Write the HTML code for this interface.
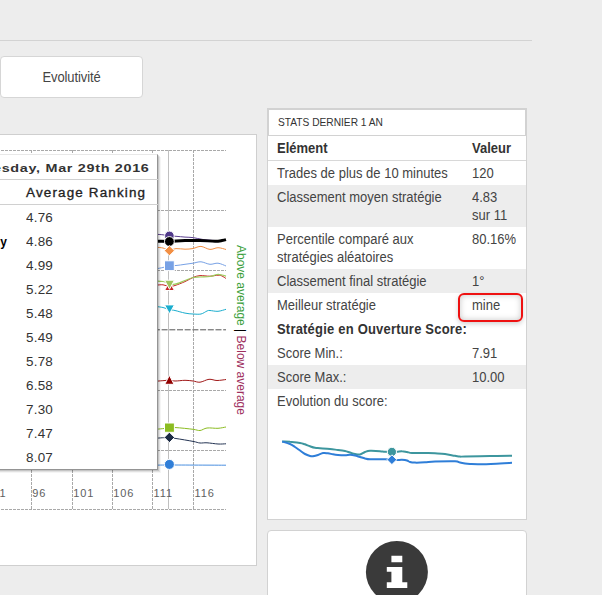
<!DOCTYPE html>
<html><head><meta charset="utf-8">
<style>
*{box-sizing:border-box;margin:0;padding:0}
html,body{width:602px;height:595px;overflow:hidden;background:#ededed;font-family:"Liberation Sans",sans-serif;color:#333;position:relative}
.abs{position:absolute}
#hr{left:0;top:40px;width:532px;height:1px;background:#d3d3d3}
#btn{left:0;top:56px;width:143px;height:42px;background:#fff;border:1px solid #d6d6d6;border-radius:4px;font-size:13px;letter-spacing:-0.1px;text-align:center;line-height:40px;color:#444}
#chart{left:-20px;top:134px;width:277px;height:432px;background:#fff;border:1px solid #cfcfcf}
#svg{left:0;top:0;width:602px;height:595px}
#tip{left:-60px;top:154px;width:218px;height:316px;background:#fff;border:1px solid #e8e8e8;border-right:1px solid #949494;border-bottom:1px solid #949494;box-shadow:1px 1px 0 rgba(0,0,0,0.12),2px 2px 0 rgba(0,0,0,0.08),3px 3px 0 rgba(0,0,0,0.04)}
.tt{font-size:12px;color:#333;white-space:nowrap}
#stats{left:267px;top:108px;width:260px;height:412px;background:#fff;border:1px solid #d2d2d2}
#shead{left:0;top:0;width:258px;height:27px;border:1px solid #d2d2d2;font-size:10.2px;padding-left:9px;line-height:25px;color:#333}
table{position:absolute;left:0;top:27px;width:258px;border-collapse:collapse;font-size:13px;color:#444}
td{padding:3px 0 3px 9px;line-height:18px;vertical-align:top}
td.v{width:59px;padding-left:5px}
tr.g td{background:#ededed}
.t{display:inline-block;transform:translateY(1px) scaleY(1.1);transform-origin:0 13.5px}
tr.h td{font-weight:bold;color:#333;border-bottom:1px solid #d8d8d8;padding-top:3px;padding-bottom:3px;line-height:18px}
#mine{left:457.5px;top:293px;width:65px;height:28.5px;border:2px solid #ee1111;border-radius:6px;box-shadow:inset 0 0 6px rgba(0,0,0,0.22),0 2px 5px rgba(0,0,0,0.18)}
#info{left:267px;top:530px;width:260px;height:80px;background:#fff;border:1px solid #d2d2d2;border-radius:4px}
</style></head><body>
<div id="hr" class="abs"></div>
<div id="btn" class="abs"><span class="t" style="transform-origin:0 25px">Evolutivité</span></div>
<div id="chart" class="abs"></div>

<svg id="svg" class="abs" width="602" height="595" viewBox="0 0 602 595">
 <g stroke="#a9a9a9" stroke-width="1" stroke-dasharray="3,1" fill="none" shape-rendering="crispEdges">
  <path d="M-3 150.5H226M-3 210.5H226M-3 270.5H226M-3 390.5H226M-3 450.5H226M-3 509.5H226"/>
  <path d="M31.5 150V509M72.5 150V509M112.5 150V509M152.5 150V509M193.5 150V509"/>
 </g>
 <path d="M-0.1 329.8H226" stroke="#555" stroke-width="1" stroke-dasharray="6,1.7" fill="none"/>
 <path d="M168.5 150V509" stroke="#c0c0c0" stroke-width="1" shape-rendering="crispEdges"/>
 <g fill="#606060" font-family="Liberation Sans" font-size="11" letter-spacing="0.9">
  <text x="-7.5" y="497">91</text><text x="32.3" y="497">96</text><text x="73.3" y="497">101</text><text x="113.3" y="497">106</text><text x="153.5" y="497">111</text><text x="194.5" y="497">116</text>
 </g>
 <g fill="none" stroke-linejoin="round" stroke-linecap="butt">
  <path d="M156.0 234.3 C157.2 234.4 160.8 234.5 163.0 234.8 C165.2 235.1 167.1 235.7 169.3 235.9 C171.5 236.2 173.4 236.1 176.0 236.3 C178.6 236.5 182.2 236.9 185.0 237.1 C187.8 237.3 190.0 237.2 193.0 237.6 C196.0 238.0 199.3 239.0 203.0 239.5 C206.7 240.0 211.2 240.3 215.0 240.5 C218.8 240.7 224.2 240.5 226.0 240.5" stroke="#5b3f8f" stroke-width="1"/>
  <path d="M156.0 241.2 C158.2 241.2 166.0 241.4 169.3 241.4 C172.6 241.4 173.4 241.2 176.0 241.0 C178.6 240.8 181.0 240.6 185.0 240.5 C189.0 240.4 195.0 240.4 200.0 240.5 C205.0 240.6 211.3 241.2 215.0 241.2 C218.7 241.2 220.2 240.8 222.0 240.5 C223.8 240.2 225.3 239.8 226.0 239.6" stroke="#000" stroke-width="3"/>
  <path d="M156.0 247.3 C157.2 247.4 160.8 247.5 163.0 248.0 C165.2 248.5 167.1 250.4 169.3 250.5 C171.5 250.6 173.4 248.8 176.0 248.6 C178.6 248.4 182.2 249.2 185.0 249.2 C187.8 249.2 190.3 249.0 193.0 248.5 C195.7 248.0 198.2 246.2 201.0 246.4 C203.8 246.6 207.2 249.2 210.0 249.4 C212.8 249.6 215.3 247.7 218.0 247.7 C220.7 247.7 224.7 249.2 226.0 249.5" stroke="#f28f43" stroke-width="1"/>
  <path d="M156.0 268.8 C157.2 268.6 160.8 268.0 163.0 267.5 C165.2 267.0 167.1 266.0 169.3 265.7 C171.5 265.4 173.4 265.7 176.0 265.5 C178.6 265.3 182.2 264.7 185.0 264.3 C187.8 263.9 190.3 263.6 193.0 263.2 C195.7 262.8 198.2 261.6 201.0 261.8 C203.8 262.0 207.2 264.1 210.0 264.3 C212.8 264.5 215.3 262.9 218.0 263.2 C220.7 263.5 224.7 265.5 226.0 266.0" stroke="#77a1e5" stroke-width="1"/>
  <path d="M156.0 285.2 C157.2 285.1 160.8 284.6 163.0 284.8 C165.2 285.0 167.3 286.4 169.3 286.5 C171.3 286.6 172.4 286.3 175.0 285.5 C177.6 284.7 182.0 282.9 185.0 281.6 C188.0 280.3 190.5 278.5 193.0 277.5 C195.5 276.5 197.2 275.8 200.0 275.6 C202.8 275.4 207.0 276.3 210.0 276.2 C213.0 276.1 216.0 275.2 218.0 275.2 C220.0 275.2 220.7 275.4 222.0 276.0 C223.3 276.6 225.3 278.1 226.0 278.5" stroke="#c42525" stroke-width="1"/>
  <path d="M156.0 281.0 C157.2 281.1 160.8 281.1 163.0 281.5 C165.2 281.9 167.3 283.1 169.3 283.5 C171.3 283.9 172.4 284.7 175.0 284.2 C177.6 283.7 182.0 281.6 185.0 280.5 C188.0 279.4 190.5 278.1 193.0 277.5 C195.5 276.9 197.2 277.2 200.0 277.0 C202.8 276.8 207.2 276.9 210.0 276.5 C212.8 276.1 215.0 274.8 217.0 274.5 C219.0 274.2 220.5 274.7 222.0 275.0 C223.5 275.3 225.3 276.0 226.0 276.2" stroke="#9ccc5a" stroke-width="1.2"/>
  <path d="M156.0 306.5 C157.2 306.7 160.8 307.0 163.0 307.5 C165.2 308.0 167.3 309.0 169.3 309.5 C171.3 310.0 172.4 309.9 175.0 310.5 C177.6 311.1 182.0 312.5 185.0 313.1 C188.0 313.7 190.3 313.9 193.0 314.0 C195.7 314.1 198.7 314.5 201.0 314.0 C203.3 313.5 205.5 311.6 207.0 311.0 C208.5 310.4 208.2 310.4 210.0 310.5 C211.8 310.6 215.3 311.5 218.0 311.3 C220.7 311.1 224.7 309.6 226.0 309.3" stroke="#1aadce" stroke-width="1"/>
  <path d="M156.0 381.2 C157.5 381.1 162.8 380.7 165.0 380.5 C167.2 380.3 167.6 379.9 169.3 380.0 C171.0 380.1 172.4 380.9 175.0 381.0 C177.6 381.1 182.0 380.3 185.0 380.3 C188.0 380.3 190.5 380.7 193.0 381.0 C195.5 381.3 197.3 382.5 200.0 382.2 C202.7 381.9 206.2 379.6 209.0 379.3 C211.8 379.0 214.2 380.5 217.0 380.5 C219.8 380.5 224.5 379.7 226.0 379.5" stroke="#a01818" stroke-width="1"/>
  <path d="M156.0 429.3 C158.2 429.1 166.0 428.3 169.3 428.0 C172.6 427.7 172.1 427.4 176.0 427.6 C179.9 427.8 189.0 428.8 193.0 429.3 C197.0 429.8 197.7 430.7 200.0 430.5 C202.3 430.3 204.0 428.4 207.0 428.0 C210.0 427.6 214.8 428.5 218.0 428.3 C221.2 428.1 224.7 427.2 226.0 427.0" stroke="#8bbc21" stroke-width="1"/>
  <path d="M156.0 438.2 C158.2 438.1 166.0 437.4 169.3 437.5 C172.6 437.6 172.1 437.9 176.0 438.5 C179.9 439.1 189.0 440.6 193.0 441.4 C197.0 442.1 197.7 442.8 200.0 443.0 C202.3 443.2 204.0 442.6 207.0 442.8 C210.0 443.0 214.8 443.8 218.0 444.0 C221.2 444.2 224.7 443.8 226.0 443.8" stroke="#233352" stroke-width="1"/>
  <path d="M156.0 465.2 C158.2 465.2 157.6 465.0 169.3 465.0 C181.0 465.0 216.6 465.2 226.0 465.2" stroke="#4a8fe0" stroke-width="1"/>
 </g>
 <g stroke="#fff" stroke-width="1">
  <circle cx="169.4" cy="235.9" r="4.8" fill="#50398a"/>
  <circle cx="169.4" cy="241.5" r="4.9" fill="#000"/>
  <path d="M169.4 245.6 L174.5 250.7 L169.4 255.8 L164.3 250.7Z" fill="#f28f43"/>
  <rect x="164.5" y="260.8" width="9.8" height="9.8" fill="#77a1e5"/>
  <path d="M164.6 290.5 L174.4 290.5 L169.5 281.5Z" fill="#c42525"/>
  <path d="M164.6 280.2 L174.4 280.2 L169.5 289.3Z" fill="#9fc45e"/>
  <path d="M164.6 304.9 L174.4 304.9 L169.5 313.8Z" fill="#1aadce"/>
  <path d="M164.8 384.3 L174 384.3 L169.4 375.3Z" fill="#920000"/>
  <rect x="164.5" y="423" width="9.9" height="9.3" fill="#8bbc21"/>
  <path d="M169.4 432.2 L174.6 437.4 L169.4 442.6 L164.2 437.4Z" fill="#1c2b45"/>
  <circle cx="169.4" cy="464.4" r="5" fill="#2f7ed8"/>
 </g>
 <g font-family="Liberation Sans" font-size="12" transform="translate(236.5,245) rotate(90)">
  <text x="0" y="0"><tspan fill="#3c9f3c">Above average</tspan><tspan fill="#000"> | </tspan><tspan fill="#9e2f5e">Below average</tspan></text>
 </g>
</svg>

<div id="tip" class="abs">
 <div class="abs" style="left:0;top:24px;width:217px;height:1px;background:#d0d0d0"></div>
 <div class="abs" style="left:0;top:49px;width:217px;height:1px;background:#d0d0d0"></div>
</div>
<div class="abs tt" style="right:452px;top:162px;font-size:11.5px;font-weight:bold;letter-spacing:0.55px;transform:scaleX(1.25);transform-origin:right top">Tuesday, Mar 29th 2016</div>
<div class="abs tt" style="left:26px;top:186px;color:#222;-webkit-text-stroke:0.3px #222;letter-spacing:1.03px;transform:scaleX(1.12);transform-origin:left top">Average Ranking</div>
<div class="abs tt" style="left:26px;top:211px;letter-spacing:0.2px;transform:scaleX(1.12);transform-origin:left top">4.76</div>
<div class="abs tt" style="left:26px;top:235px;letter-spacing:0.2px;transform:scaleX(1.12);transform-origin:left top">4.86</div>
<div class="abs tt" style="left:26px;top:259px;letter-spacing:0.2px;transform:scaleX(1.12);transform-origin:left top">4.99</div>
<div class="abs tt" style="left:26px;top:283px;letter-spacing:0.2px;transform:scaleX(1.12);transform-origin:left top">5.22</div>
<div class="abs tt" style="left:26px;top:307px;letter-spacing:0.2px;transform:scaleX(1.12);transform-origin:left top">5.48</div>
<div class="abs tt" style="left:26px;top:331px;letter-spacing:0.2px;transform:scaleX(1.12);transform-origin:left top">5.49</div>
<div class="abs tt" style="left:26px;top:355px;letter-spacing:0.2px;transform:scaleX(1.12);transform-origin:left top">5.78</div>
<div class="abs tt" style="left:26px;top:379px;letter-spacing:0.2px;transform:scaleX(1.12);transform-origin:left top">6.58</div>
<div class="abs tt" style="left:26px;top:403px;letter-spacing:0.2px;transform:scaleX(1.12);transform-origin:left top">7.30</div>
<div class="abs tt" style="left:26px;top:427px;letter-spacing:0.2px;transform:scaleX(1.12);transform-origin:left top">7.47</div>
<div class="abs tt" style="left:26px;top:451px;letter-spacing:0.2px;transform:scaleX(1.12);transform-origin:left top">8.07</div>
<div class="abs tt" style="right:595px;top:235px;font-weight:bold;color:#000">Strategy</div>

<div id="stats" class="abs">
 <div id="shead" class="abs">STATS DERNIER 1 AN</div>
 <table>
  <tr class="h"><td><span class="t">Elément</span></td><td class="v"><span class="t">Valeur</span></td></tr>
  <tr><td><span class="t">Trades de plus de 10 minutes</span></td><td class="v"><span class="t">120</span></td></tr>
  <tr class="g"><td><span class="t">Classement moyen stratégie</span></td><td class="v"><span class="t">4.83</span><br><span class="t">sur 11</span></td></tr>
  <tr><td><span class="t">Percentile comparé aux</span><br><span class="t">stratégies aléatoires</span></td><td class="v"><span class="t">80.16%</span></td></tr>
  <tr class="g"><td><span class="t">Classement final stratégie</span></td><td class="v"><span class="t">1°</span></td></tr>
  <tr><td><span class="t">Meilleur stratégie</span></td><td class="v"><span class="t">mine</span></td></tr>
  <tr><td colspan="2" style="font-weight:bold;letter-spacing:0.2px;color:#333"><span class="t">Stratégie en Ouverture Score:</span></td></tr>
  <tr><td><span class="t">Score Min.:</span></td><td class="v"><span class="t">7.91</span></td></tr>
  <tr class="g"><td><span class="t">Score Max.:</span></td><td class="v"><span class="t">10.00</span></td></tr>
  <tr><td colspan="2"><span class="t">Evolution du score:</span></td></tr>
 </table>
</div>
<div id="mine" class="abs"></div>
<div id="info" class="abs"></div>
<svg class="abs" style="left:0;top:0" width="602" height="595" viewBox="0 0 602 595">
 <g fill="none" stroke-width="2" stroke-linejoin="round">
  <path d="M282.2 441.5 C283.5 441.5 287.0 441.4 290.0 441.7 C293.0 441.9 297.5 442.6 300.0 443.0 C302.5 443.4 303.3 443.8 305.0 444.3 C306.7 444.9 308.3 445.7 310.0 446.3 C311.7 446.9 313.3 447.5 315.0 447.8 C316.7 448.1 317.5 448.0 320.0 448.2 C322.5 448.4 327.0 448.7 330.0 449.0 C333.0 449.3 335.5 449.7 338.0 450.0 C340.5 450.3 343.0 450.6 345.0 451.0 C347.0 451.4 348.3 452.0 350.0 452.5 C351.7 453.0 353.3 453.7 355.0 454.0 C356.7 454.3 358.3 454.8 360.0 454.5 C361.7 454.2 363.3 452.6 365.0 452.0 C366.7 451.4 367.5 450.9 370.0 450.8 C372.5 450.7 377.5 451.0 380.0 451.2 C382.5 451.4 383.0 451.7 385.0 451.8 C387.0 451.9 389.8 451.9 391.8 451.9 C393.8 451.9 395.3 451.8 397.0 451.7 C398.7 451.6 400.3 451.1 402.0 451.2 C403.7 451.2 405.3 451.7 407.0 452.0 C408.7 452.3 409.0 452.8 412.0 453.0 C415.0 453.2 421.2 452.9 425.0 453.0 C428.8 453.1 431.7 453.1 435.0 453.3 C438.3 453.5 441.7 453.6 445.0 454.0 C448.3 454.4 452.5 455.4 455.0 455.8 C457.5 456.2 458.3 456.5 460.0 456.6 C461.7 456.7 460.0 456.6 465.0 456.5 C470.0 456.4 482.2 456.1 490.0 456.0 C497.8 455.9 508.3 455.8 512.0 455.8" stroke="#3d969e"/>
  <path d="M282.2 441.5 C283.5 441.9 287.9 443.1 290.0 444.0 C292.1 444.9 293.3 445.9 295.0 447.0 C296.7 448.1 298.3 449.3 300.0 450.5 C301.7 451.7 303.3 453.1 305.0 454.0 C306.7 454.9 308.7 455.6 310.0 456.0 C311.3 456.4 311.7 456.5 313.0 456.3 C314.3 456.1 316.3 455.6 318.0 455.0 C319.7 454.4 321.3 453.3 323.0 453.0 C324.7 452.7 326.3 453.1 328.0 453.3 C329.7 453.5 331.3 454.0 333.0 454.3 C334.7 454.6 336.0 454.8 338.0 455.0 C340.0 455.2 343.0 455.3 345.0 455.3 C347.0 455.3 348.3 454.8 350.0 454.8 C351.7 454.8 353.3 455.1 355.0 455.5 C356.7 455.9 358.3 456.5 360.0 457.0 C361.7 457.5 363.3 458.1 365.0 458.5 C366.7 458.9 366.7 459.2 370.0 459.3 C373.3 459.4 381.4 459.2 385.0 459.3 C388.6 459.4 389.8 459.6 391.8 459.7 C393.8 459.8 395.3 460.0 397.0 460.0 C398.7 460.0 400.3 459.7 402.0 459.8 C403.7 459.9 405.7 460.1 407.0 460.5 C408.3 460.9 408.7 461.6 410.0 462.0 C411.3 462.4 412.5 462.6 415.0 462.6 C417.5 462.7 421.7 462.5 425.0 462.3 C428.3 462.1 430.0 461.8 435.0 461.6 C440.0 461.4 450.8 461.2 455.0 461.3 C459.2 461.4 458.3 462.1 460.0 462.5 C461.7 462.9 463.3 463.2 465.0 463.5 C466.7 463.8 467.5 463.9 470.0 464.0 C472.5 464.1 475.0 464.3 480.0 464.2 C485.0 464.1 494.7 463.7 500.0 463.5 C505.3 463.3 510.0 462.9 512.0 462.8" stroke="#2f7ed8"/>
 </g>
 <circle cx="391.9" cy="451.9" r="4.6" fill="#3d969e" stroke="#fff" stroke-width="1"/>
 <path d="M391.9 454.8 L396.8 459.7 L391.9 464.6 L387 459.7Z" fill="#2f7ed8" stroke="#fff" stroke-width="1"/>
 <circle cx="396.9" cy="572" r="31" fill="#3a3a3a"/>
 <path d="M391.4 555.7H402.3V562.2H391.4Z M386.8 567H402.3V582.3H407.3V588H386.8V582.3H391.4V571.7H386.8Z" fill="#fff"/>
</svg>
</body></html>
